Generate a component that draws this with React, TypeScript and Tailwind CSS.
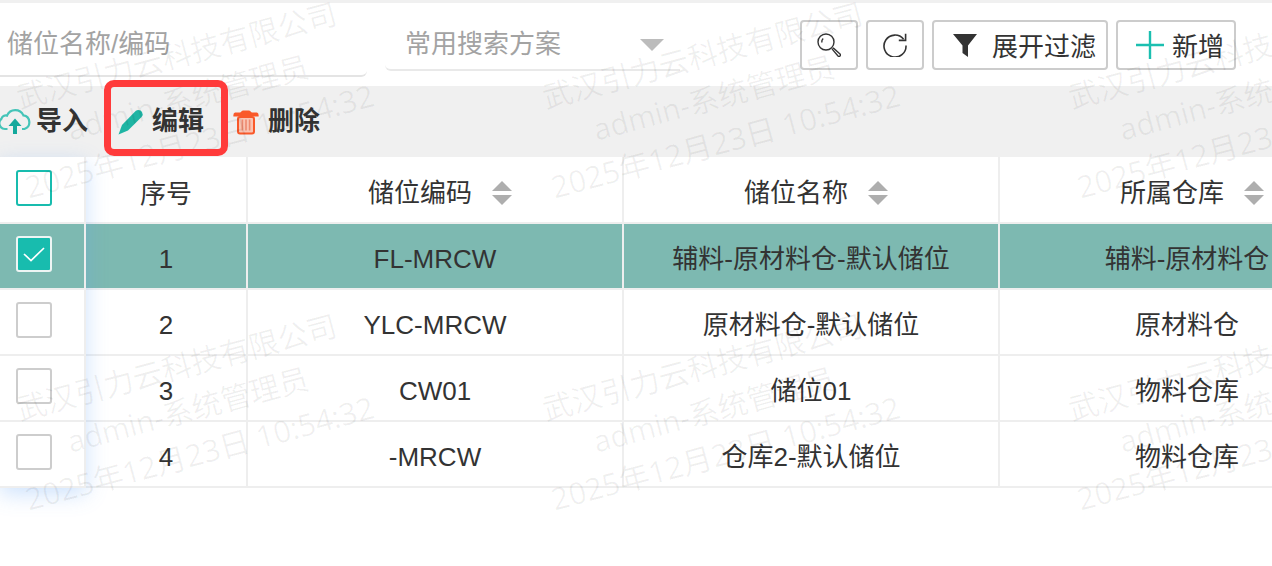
import React from "react";

const FONT = "font-['Liberation_Sans','Noto_Sans_CJK_SC',sans-serif]";

const rows = [
  { no: "1", code: "FL-MRCW", name: "辅料-原材料仓-默认储位", store: "辅料-原材料仓", active: true },
  { no: "2", code: "YLC-MRCW", name: "原材料仓-默认储位", store: "原材料仓", active: false },
  { no: "3", code: "CW01", name: "储位01", store: "物料仓库", active: false },
  { no: "4", code: "-MRCW", name: "仓库2-默认储位", store: "物料仓库", active: false },
];

const marks = [
  { x: 188, y: 98 },
  { x: 714, y: 98 },
  { x: 1240, y: 98 },
  { x: 188, y: 410 },
  { x: 714, y: 410 },
  { x: 1240, y: 410 },
];

const SortCaret = () => (
  <svg width="20" height="24" viewBox="0 0 20 24" className="shrink-0 translate-y-[3px]">
    <path d="M10 0 L20 10 H0 Z" fill="#aeaeae" />
    <path d="M0 14 H20 L10 24 Z" fill="#aeaeae" />
  </svg>
);

const Check = ({ state }: { state: "head" | "on" | "off" }) => {
  if (state === "on") {
    return (
      <span className="flex h-9 w-9 items-center justify-center rounded-[3px] border-2 border-[#eef5f4] bg-[#18bcae]">
        <svg width="22" height="16" viewBox="0 0 22 16" fill="none" stroke="#fff" strokeWidth="1.7">
          <path d="M1 8 L8 14.5 L21 2" />
        </svg>
      </span>
    );
  }
  return (
    <span
      className={
        state === "head"
          ? "block h-9 w-9 rounded-[3px] border-2 border-[#18bcae] bg-white"
          : "block h-9 w-9 rounded-[3px] border-2 border-[#cdcdcd] bg-white"
      }
    />
  );
};

const SearchIcon = () => (
  <svg width="24" height="24" viewBox="0 0 24 24" fill="none" stroke="#333" strokeWidth="1.4">
    <circle cx="9" cy="9" r="8" />
    <path d="M4.8 9.5 A4.4 4.4 0 0 1 6.2 5.6" />
    <path d="M15.4 16.4 L16.6 15.2 L23 21 A1.4 1.4 0 0 1 21 23 Z" />
  </svg>
);

const RefreshIcon = () => (
  <svg width="24" height="24" viewBox="0 0 24 24" fill="none" stroke="#333" strokeWidth="1.6">
    <path d="M20.6 6.2 A11 11 0 1 0 23 12.5" />
    <path d="M22.6 0.8 V7.4 H15.8" />
  </svg>
);

const FunnelIcon = () => (
  <svg width="24" height="24" viewBox="0 0 24 24" fill="#333">
    <path d="M0 1 H24 L15 12.5 V24 L9.5 20 V12.5 Z" />
  </svg>
);

const PlusIcon = () => (
  <svg width="28" height="28" viewBox="0 0 28 28" stroke="#1bbfb0" strokeWidth="2.4">
    <path d="M14 0 V28 M0 14 H28" />
  </svg>
);

const CloudIcon = () => (
  <svg width="34" height="27" viewBox="0 0 34 27" fill="none" stroke="#45c4b8" strokeWidth="2.2">
    <path d="M9.5 21 H7 A5.8 5.8 0 0 1 3.4 10.8 A4.6 4.6 0 0 1 9 7.6 A9 9 0 0 1 25.4 7.4 A7 7 0 0 1 26.4 21 H24" />
    <path d="M17 26 V13" stroke="#14a99c" strokeWidth="4" />
    <path d="M10.5 18 L17 10.5 L23.5 18 Z" fill="#14a99c" stroke="none" />
  </svg>
);

const PencilIcon = () => (
  <svg width="26" height="26" viewBox="0 0 26 26" fill="#1fb5a4">
    <path d="M0.5 25.5 L4 16 L17.6 2 Q20 0 22.6 1.6 L24 3 Q25.6 5.6 23.6 8 L10 21.6 Z" />
  </svg>
);

const TrashIcon = () => (
  <svg width="26" height="26" viewBox="0 0 26 26">
    <path d="M8 3 Q8.5 1.4 10 1.4 H16 Q17.5 1.4 18 3 L19 3.4 H24 Q26 4 25.6 7.6 H0.4 Q0 4 2 3.4 H7 Z" fill="#f9592a" />
    <rect x="5" y="8" width="16" height="16.5" rx="2" fill="#fac3b2" stroke="#f9592a" strokeWidth="2" />
    <path d="M9.4 10.5 V21.5 M13 10.5 V21.5 M16.6 10.5 V21.5" stroke="#ee8a70" strokeWidth="1.6" />
  </svg>
);

const ToolButton = ({ className, children }: { className: string; children: React.ReactNode }) => (
  <button
    type="button"
    className={`flex h-[50px] items-center justify-center rounded-[4px] border-2 border-[#cccccc] bg-white text-[26px] text-[#333] ${className}`}
  >
    {children}
  </button>
);

const HeadCell = ({ label, className }: { label: string; className: string }) => (
  <div className={`flex items-center justify-center gap-[20px] border-r-2 border-[#eeeeee] pl-[10px] ${className}`}>
    <span className="translate-y-[4px]">{label}</span>
    <SortCaret />
  </div>
);

const Cell = ({ className, children }: { className: string; children: React.ReactNode }) => (
  <div className={`flex items-center justify-center border-r-2 border-[#eeeeee] pt-[6px] ${className}`}>{children}</div>
);

export default function App() {
  return (
    <div className={`relative h-[566px] w-[1272px] overflow-hidden bg-white text-[26px] text-[#333] ${FONT}`}>
      <div className="h-[3px] bg-[#f0f0f0]" />

      {/* search row */}
      <div className="flex h-[83px] items-start">
        <div className="mt-[12px] flex h-[62px] w-[367px] items-center rounded-br-[6px] border-b-2 border-[#e4e4e4] pb-[2px] pl-[7px] text-[#a3a3a3]">
          储位名称/编码
        </div>
        <div className="ml-[18px] mt-[12px] flex h-[56px] w-[295px] items-center justify-between rounded-bl-[6px] border-b-2 border-[#e9e9e9] pl-[20px] pr-[16px] text-[#a3a3a3]">
          <span className="translate-y-[2px]">常用搜索方案</span>
          <span className="h-0 w-0 translate-y-[3px] border-x-[12px] border-t-[12px] border-x-transparent border-t-[#bcbcbc]" />
        </div>
        <div className="ml-[120px] mt-[17px] flex gap-[8px]">
          <ToolButton className="w-[58px]">
            <SearchIcon />
          </ToolButton>
          <ToolButton className="w-[58px]">
            <RefreshIcon />
          </ToolButton>
          <ToolButton className="w-[176px] gap-[15px] pl-[9px]">
            <FunnelIcon />
            <span className="translate-y-[2px]">展开过滤</span>
          </ToolButton>
          <ToolButton className="w-[120px] gap-[8px] pl-[8px]">
            <PlusIcon />
            <span className="translate-y-[2px]">新增</span>
          </ToolButton>
        </div>
      </div>

      {/* action bar */}
      <div className="flex h-[71px] items-center bg-[#f0f0f0] font-bold">
        <div className="ml-[-2px] flex items-center gap-[4px]">
          <CloudIcon />
          <span>导入</span>
        </div>
        <div className="ml-[30px] flex items-center gap-[8px]">
          <PencilIcon />
          <span>编辑</span>
        </div>
        <div className="ml-[29px] flex items-center gap-[9px]">
          <TrashIcon />
          <span>删除</span>
        </div>
      </div>

      {/* table */}
      <div className="flex">
        <div className="relative z-10 w-[86px] shrink-0 bg-white shadow-[0_6px_20px_rgba(90,160,250,0.3)]">
          <div className="flex h-[67px] items-center border-b-2 border-r-2 border-[#eeeeee] pb-[4px] pl-[16px]">
            <Check state="head" />
          </div>
          {rows.map((row) => (
            <div
              key={row.no}
              className={
                row.active
                  ? "flex h-[66px] items-center border-b-2 border-r-2 border-[#eeeeee] bg-[#7db9b1] pb-[4px] pl-[16px]"
                  : "flex h-[66px] items-center border-b-2 border-r-2 border-[#eeeeee] pb-[4px] pl-[16px]"
              }
            >
              <Check state={row.active ? "on" : "off"} />
            </div>
          ))}
        </div>

        <div className="w-[1290px] shrink-0">
          <div className="flex h-[67px] border-b-2 border-[#eeeeee]">
            <div className="flex w-[162px] items-center justify-center border-r-2 border-[#eeeeee]">
              <span className="translate-y-[5px]">序号</span>
            </div>
            <HeadCell label="储位编码" className="w-[376px]" />
            <HeadCell label="储位名称" className="w-[376px]" />
            <HeadCell label="所属仓库" className="w-[376px]" />
          </div>
          {rows.map((row) => (
            <div
              key={row.no}
              className={
                row.active
                  ? "flex h-[66px] border-b-2 border-[#eeeeee] bg-[#7db9b1]"
                  : "flex h-[66px] border-b-2 border-[#eeeeee]"
              }
            >
              <Cell className="w-[162px]">{row.no}</Cell>
              <Cell className="w-[376px]">{row.code}</Cell>
              <Cell className="w-[376px]">{row.name}</Cell>
              <Cell className="w-[376px]">{row.store}</Cell>
            </div>
          ))}
        </div>
      </div>

      {/* watermark */}
      <div className="pointer-events-none absolute inset-0 z-20 overflow-hidden">
        {marks.map((m) => (
          <div
            key={`${m.x}-${m.y}`}
            className="absolute flex w-[420px] -translate-x-1/2 -translate-y-1/2 -rotate-15 flex-col items-center whitespace-nowrap font-['Open_Sans','Noto_Sans_CJK_SC',sans-serif] text-[30px] leading-[44px] text-black/[0.06]"
            style={{ left: m.x, top: m.y }}
          >
            <span>武汉引力云科技有限公司</span>
            <span>admin-系统管理员</span>
            <span className="text-[30.5px]">2025年12月23日 10:54:32</span>
          </div>
        ))}
      </div>

      {/* red annotation */}
      <div className="pointer-events-none absolute left-[104px] top-[80px] z-30 h-[76px] w-[124px] rounded-[10px] border-[7px] border-[#ff3b3b]" />
    </div>
  );
}
